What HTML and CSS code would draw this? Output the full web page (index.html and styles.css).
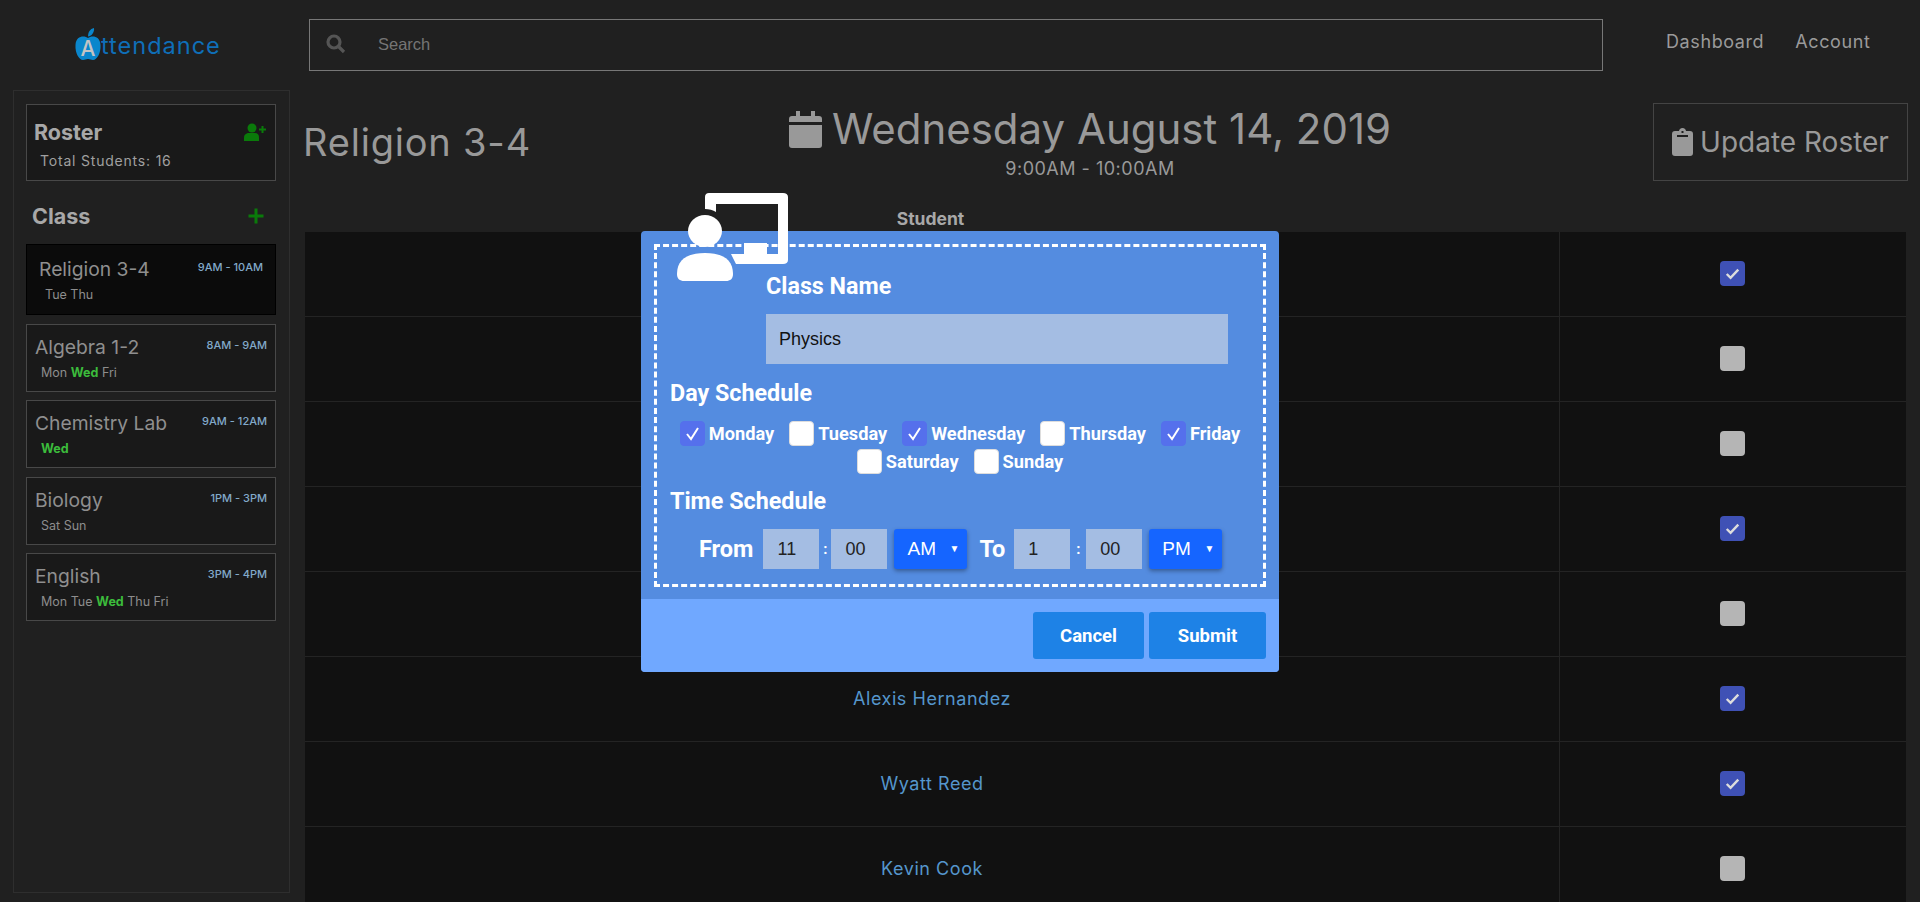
FILE: index.html
```html
<!DOCTYPE html>
<html lang="en">
<head>
<meta charset="utf-8">
<title>Attendance</title>
<link rel="stylesheet" href="styles.css">
</head>
<body>
<header class="topbar">
  <div class="logo">
    <span class="logo-apple">
      <svg class="apple-svg" viewBox="0 0 26 32"><path d="M13 10C10 7.500 1 7 0.500 17C0 25 4 32 8 32C10 32 11 31 13 31C15 31 16 32 18 32C22 32 26 25 25.500 17C25 7 16 7.500 13 10Z"/><path d="M13 8.500C13 4 15 1 19 0C19.500 4 17 8 13 8.500Z"/></svg>
      <span class="logo-a">A</span>
    </span><span class="logo-text">ttendance</span>
  </div>
  <div class="search">
    <svg class="search-icon" viewBox="0 0 20 20"><circle cx="8" cy="8" r="6"/><path d="M12.500 12.500L18 18"/></svg>
    <span class="search-text">Search</span>
  </div>
  <nav class="nav"><a>Dashboard</a><a>Account</a></nav>
</header>
<div class="layout">
  <aside class="sidebar">
    <section class="roster">
      <div class="roster-head">
        <h2>Roster</h2>
        <svg class="add-user" viewBox="0 0 22 18"><circle cx="8" cy="5" r="4.500"/><path d="M0 18V14.500C0 11.500 2.500 10 5 10H11C13.500 10 15 11.500 15 14.500V18Z"/><path d="M15 6.500H22M18.500 3V10" class="plus-line"/></svg>
      </div>
      <p>Total Students: 16</p>
    </section>
    <div class="class-head">
      <h2>Class</h2>
      <svg class="add-class" viewBox="0 0 16 16"><path d="M8 0.500V15.500M0.500 8H15.500"/></svg>
    </div>
    <article class="class-card active rel"><div class="card-top"><h3>Religion 3-4</h3><span class="time">9AM - 10AM</span></div><p class="days">Tue Thu</p></article>
    <article class="class-card"><div class="card-top"><h3>Algebra 1-2</h3><span class="time">8AM - 9AM</span></div><p class="days">Mon <b>Wed</b> Fri</p></article>
    <article class="class-card"><div class="card-top"><h3>Chemistry Lab</h3><span class="time">9AM - 12AM</span></div><p class="days"><b>Wed</b></p></article>
    <article class="class-card"><div class="card-top"><h3>Biology</h3><span class="time">1PM - 3PM</span></div><p class="days">Sat Sun</p></article>
    <article class="class-card"><div class="card-top"><h3>English</h3><span class="time">3PM - 4PM</span></div><p class="days">Mon Tue <b>Wed</b> Thu Fri</p></article>
  </aside>
  <main class="main">
    <div class="title-row">
      <h1>Religion 3-4</h1>
      <div class="date">
        <div class="date-line">
          <svg class="cal" viewBox="0 0 33 37"><path d="M7 0H11V5H22V0H26V5H30C32 5 33 6 33 8V11H0V8C0 6 1 5 3 5H7Z"/><path d="M0 14H33V34C33 36 32 37 30 37H3C1 37 0 36 0 34Z"/></svg>
          <span>Wednesday August 14, 2019</span>
        </div>
        <div class="date-time">9:00AM - 10:00AM</div>
      </div>
      <div class="update">
        <svg class="clip" viewBox="0 0 21 28"><path d="M7 3C7 1.500 8.500 0 10.500 0C12.500 0 14 1.500 14 3H18C20 3 21 4 21 6V25C21 27 20 28 18 28H3C1 28 0 27 0 25V6C0 4 1 3 3 3ZM5 7V9H16V7ZM9.500 3V5H11.500V3Z" fill-rule="evenodd"/></svg>
        <span>Update Roster</span>
      </div>
    </div>
    <div class="table-head">Student</div>
    <div class="table">
      <div class="row"><span class="name"></span><span class="mark"><i class="box on"><svg viewBox="0 0 26 26"><path d="M7 13.500L11 17.500L19 9"/></svg></i></span></div>
      <div class="row"><span class="name"></span><span class="mark"><i class="box"></i></span></div>
      <div class="row"><span class="name"></span><span class="mark"><i class="box"></i></span></div>
      <div class="row"><span class="name"></span><span class="mark"><i class="box on"><svg viewBox="0 0 26 26"><path d="M7 13.500L11 17.500L19 9"/></svg></i></span></div>
      <div class="row"><span class="name"></span><span class="mark"><i class="box"></i></span></div>
      <div class="row"><span class="name">Alexis Hernandez</span><span class="mark"><i class="box on"><svg viewBox="0 0 26 26"><path d="M7 13.500L11 17.500L19 9"/></svg></i></span></div>
      <div class="row"><span class="name">Wyatt Reed</span><span class="mark"><i class="box on"><svg viewBox="0 0 26 26"><path d="M7 13.500L11 17.500L19 9"/></svg></i></span></div>
      <div class="row"><span class="name">Kevin Cook</span><span class="mark"><i class="box"></i></span></div>
    </div>
  </main>
</div>
<div class="modal">
  <svg class="modal-icon" viewBox="0 0 112 89">
    <path d="M29 4C29 1.500 30.500 0 33 0H107C110 0 112 1.500 112 4V67C112 69.500 110 71 107 71H60L55 61H102V11H40V19C37 17 33 16 29 16Z"/>
    <rect x="68" y="50" width="23" height="13"/>
    <ellipse cx="29" cy="38" rx="17" ry="16"/>
    <path d="M1 81C1 66 12 60 29 60C46 60 57 66 57 81C57 86 54 88 50 88H8C4 88 1 86 1 81Z"/>
  </svg>
  <div class="modal-body">
    <div class="name-field">
      <label class="label">Class Name</label>
      <div class="text-input">Physics</div>
    </div>
    <div class="label">Day Schedule</div>
    <div class="days-grid">
      <span class="day"><i class="chk on"><svg viewBox="0 0 25 25"><path d="M7 13L11 18L18 7"/></svg></i>Monday</span>
      <span class="day"><i class="chk"></i>Tuesday</span>
      <span class="day"><i class="chk on"><svg viewBox="0 0 25 25"><path d="M7 13L11 18L18 7"/></svg></i>Wednesday</span>
      <span class="day"><i class="chk"></i>Thursday</span>
      <span class="day"><i class="chk on"><svg viewBox="0 0 25 25"><path d="M7 13L11 18L18 7"/></svg></i>Friday</span>
      <span class="day"><i class="chk"></i>Saturday</span>
      <span class="day"><i class="chk"></i>Sunday</span>
    </div>
    <div class="label">Time Schedule</div>
    <div class="time-row">
      <span class="word">From</span>
      <span class="num">11</span><span class="colon">:</span><span class="num">00</span>
      <span class="sel">AM<em>▼</em></span>
      <span class="word to">To</span>
      <span class="num">1</span><span class="colon wide">:</span><span class="num">00</span>
      <span class="sel">PM<em>▼</em></span>
    </div>
  </div>
  <div class="modal-foot">
    <button class="btn cancel">Cancel</button>
    <button class="btn submit">Submit</button>
  </div>
</div>
</body>
</html>
```
FILE: styles.css
```css
* { box-sizing: border-box; }
html, body { margin: 0; height: 902px; overflow: hidden; }
body { background: #202020; color: #999; font-family: "Inter", "Liberation Sans", sans-serif; position: relative; }
h1, h2, h3, p { margin: 0; font-weight: 400; }

.topbar { height: 90px; display: flex; align-items: flex-start; }
.logo { width: 309px; padding: 27px 0 0 75px; display: flex; align-items: center; height: 60px; }
.logo-apple { position: relative; width: 26px; height: 32px; display: block; }
.apple-svg { width: 26px; height: 32px; fill: #0a86cc; display: block; }
.logo-a { position: absolute; left: 0; right: 0; top: 10px; text-align: center; color: #c4c4c4; font-size: 21px; line-height: 22px; font-weight: 500; }
.logo-text { color: #0f6fb8; font-size: 23.500px; letter-spacing: 1px; margin-top: 4px; }
.search { margin-top: 19px; width: 1294px; height: 52px; border: 1px solid #777; display: flex; align-items: center; padding: 0 0 2px 16px; }
.search-icon { width: 20px; height: 20px; fill: none; stroke: #555; stroke-width: 3.200; }
.search-text { font-family: "Liberation Sans", sans-serif; font-size: 16.500px; color: #757575; margin-left: 32px; }
.nav { display: flex; gap: 31px; margin: 31px 0 0 63px; font-size: 18px; letter-spacing: .6px; color: #9a9a9a; }

.layout { display: flex; align-items: flex-start; }
.sidebar { width: 277px; height: 803px; margin-left: 13px; border: 1px solid #2e2e2e; padding: 13px 13px 0 12px; }
.roster { height: 77px; background: #191919; border: 1px solid #484848; padding: 14px 8px 0 7px; }
.roster-head { display: flex; justify-content: space-between; align-items: center; }
.roster h2, .class-head h2 { font-size: 21.500px; font-weight: 700; color: #a8a8a8; }
.add-user { width: 22px; height: 18px; fill: #0a7a0a; margin-right: 1px; }
.plus-line { fill: none; stroke: #0a7a0a; stroke-width: 2; }
.roster p { font-size: 14px; letter-spacing: .8px; margin: 7px 0 0 6px; color: #a0a0a0; }
.class-head { display: flex; justify-content: space-between; align-items: center; padding: 7px 12px 0 6px; height: 63px; }
.add-class { width: 16px; height: 16px; fill: none; stroke: #0a7a0a; stroke-width: 3; }
.class-card { height: 68px; margin-bottom: 8.600px; background: #191919; border: 1px solid #484848; padding: 10px 8px 0 8px; }
.class-card.rel { height: 71px; background: #0b0b0b; border-color: #000; padding: 12px 12px 0 12px; }
.card-top { display: flex; justify-content: space-between; align-items: flex-start; }
.class-card h3 { font-size: 19.300px; color: #8f8f8f; line-height: 24px; }
.time { font-size: 11px; font-weight: 500; line-height: 16px; margin-top: 2px; color: #82a9c9; }
.days { font-size: 12.500px; color: #8d8d8d; margin: 6px 0 0 6px; }
.days b { color: #3cbc3c; }

.main { width: 1605px; margin-left: 13px; }
.title-row { display: flex; justify-content: space-between; align-items: flex-start; height: 115px; }
.title-row h1 { font-size: 38px; letter-spacing: .8px; margin-top: 29px; color: #999; }
.date { text-align: center; margin: 14px 4px 0 0; }
.date-line { display: flex; align-items: center; font-size: 42px; color: #999; gap: 10px; line-height: 50px; }
.cal { width: 33px; height: 37px; fill: #999; }
.date-time { font-size: 18px; letter-spacing: .5px; color: #999; line-height: 22px; margin-top: 4px; }
.update { width: 255px; height: 78px; margin-top: 13px; border: 1px solid #444; display: flex; align-items: center; justify-content: center; gap: 7px; font-size: 28px; color: #999; }
.clip { width: 21px; height: 28px; fill: #999; }
.table-head { height: 27px; width: 1255px; text-align: center; font-size: 17.500px; font-weight: 700; color: #a8a8a8; padding-top: 3px; }
.table { margin-left: 2px; width: 1601px; background: #111; }
.row { height: 85px; display: flex; border-bottom: 1px solid #242424; }
.name { width: 1255px; border-right: 1px solid #242424; display: flex; align-items: center; justify-content: center; padding-bottom: 2px; font-size: 18px; letter-spacing: .55px; color: #5596cc; }
.mark { flex: 1; display: flex; align-items: center; justify-content: center; padding: 0 1px 2px 0; }
.box { width: 25px; height: 25px; border-radius: 4px; background: #b5b5b5; display: block; }
.box.on { background: #3f51b5; }
.box svg { display: block; fill: none; stroke: #ddd; stroke-width: 2.500; }

.modal { position: absolute; left: 641px; top: 231px; width: 638px; height: 441px; background: #548ce0; border-radius: 4px; display: flex; flex-direction: column; font-family: "Roboto", sans-serif; color: #fff; }
.modal-icon { position: absolute; left: 35px; top: -38px; width: 112px; height: 89px; fill: #fff; z-index: 1; }
.modal-body { margin: 13px 13px 0; height: 343px; border: 3px dashed #fff; padding: 25px 13px 0; }
.label { font-size: 23.300px; font-weight: 700; display: block; }
.name-field { margin-left: 96px; }
.text-input { margin: 14px 0 15px; width: 462px; height: 50px; background: #a4bde3; color: #111; font-family: "Liberation Sans", sans-serif; font-size: 18px; line-height: 50px; padding-left: 13px; }
.days-grid { display: flex; flex-wrap: wrap; justify-content: center; column-gap: 15px; row-gap: 3px; margin: 14px 0 13px -10px; width: 600px; }
.day { display: flex; align-items: center; gap: 4px; font-size: 18.200px; font-weight: 700; height: 25px; }
.chk { width: 25px; height: 25px; background: #fff; border: 1px solid #ddd; border-radius: 4px; display: block; }
.chk.on { background: #5570ec; border-color: #5570ec; }
.chk svg { display: block; margin: -1px; fill: none; stroke: #fff; stroke-width: 2; }
.time-row { display: flex; align-items: center; margin-top: 14px; padding-left: 29px; height: 40px; }
.word { font-size: 23.500px; font-weight: 700; margin-right: 10px; }
.word.to { margin: 0 9px 0 12px; }
.num { width: 56px; height: 40px; background: #a4bde3; color: #222; font-family: "Liberation Sans", sans-serif; font-size: 18px; line-height: 40px; padding-left: 14px; }
.colon { width: 12px; text-align: center; font-weight: 700; font-size: 15px; }
.colon.wide { width: 16px; }
.sel { width: 73px; height: 40px; margin-left: 7px; background: #1565ff; border-radius: 3px; box-shadow: 0 2px 4px rgba(0,0,0,.35); font-family: "Liberation Sans", sans-serif; font-size: 19px; line-height: 40px; padding-left: 13px; display: flex; justify-content: space-between; padding-right: 8px; }
.sel em { font-style: normal; font-size: 10px; }
.modal-foot { margin-top: 12px; flex: 1; background: #70a8ff; border-radius: 0 0 4px 4px; display: flex; justify-content: flex-end; gap: 5px; padding: 13px 13px 0 0; }
.btn { height: 47px; border: 0; border-radius: 3px; background: #1e82e6; color: #fff; font-family: "Roboto", sans-serif; font-size: 18.500px; font-weight: 700; }
.cancel { width: 111px; }
.submit { width: 117px; }
```
